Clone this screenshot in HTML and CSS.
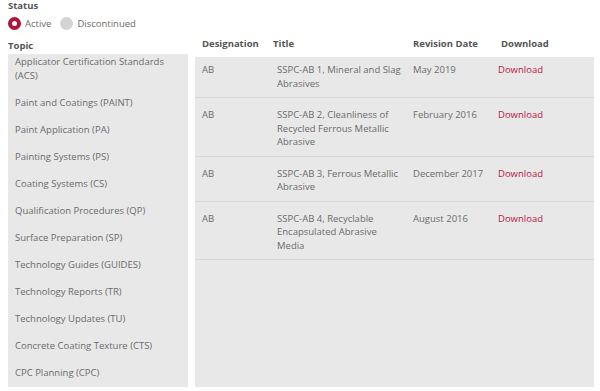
FILE: index.html
```html
<!DOCTYPE html>
<html lang="en">
<head>
  <meta charset="UTF-8" />
  <title>Standards</title>
  <link rel="stylesheet" href="styles.css">
</head>
<body>

<!-- Filtre statut -->
<div class="status">
  <div class="label">Status</div>
  <div class="radios">
    <label class="radio"><span class="dot on"></span>Active</label>
    <label class="radio"><span class="dot"></span>Discontinued</label>
  </div>
</div>

<div class="layout">
  <aside class="topics">
    <div class="label">Topic</div>
    <div class="topic-panel">
      <ul>
        <li>Applicator Certification Standards (ACS)</li>
        <li>Paint and Coatings (PAINT)</li>
        <li>Paint Application (PA)</li>
        <li>Painting Systems (PS)</li>
        <li>Coating Systems (CS)</li>
        <li>Qualification Procedures (QP)</li>
        <li>Surface Preparation (SP)</li>
        <li>Technology Guides (GUIDES)</li>
        <li>Technology Reports (TR)</li>
        <li>Technology Updates (TU)</li>
        <li>Concrete Coating Texture (CTS)</li>
        <li>CPC Planning (CPC)</li>
      </ul>
    </div>
  </aside>

  <section class="docs">
    <div class="row head">
      <div>Designation</div>
      <div class="h-title">Title</div>
      <div>Revision Date</div>
      <div class="h-dl">Download</div>
    </div>
    <div class="doc-body">
      <div class="row">
        <div>AB</div>
        <div>SSPC-AB 1, Mineral and Slag Abrasives</div>
        <div>May 2019</div>
        <div><a href="#">Download</a></div>
      </div>
      <div class="row">
        <div>AB</div>
        <div>SSPC-AB 2, Cleanliness of Recycled Ferrous Metallic Abrasive</div>
        <div>February 2016</div>
        <div><a href="#">Download</a></div>
      </div>
      <div class="row">
        <div>AB</div>
        <div>SSPC-AB 3, Ferrous Metallic Abrasive</div>
        <div>December 2017</div>
        <div><a href="#">Download</a></div>
      </div>
      <div class="row">
        <div>AB</div>
        <div>SSPC-AB 4, Recyclable Encapsulated Abrasive Media</div>
        <div>August 2016</div>
        <div><a href="#">Download</a></div>
      </div>
    </div>
  </section>
</div>

</body>
</html>
```

FILE: styles.css
```css
html, body {
  margin: 0;
  padding: 0;
  height: 100%;
  overflow: hidden;
  background: white;
}

body {
  padding: 0 6px 0 8px;
  font-family: 'Open Sans', 'Liberation Sans', sans-serif;
  font-size: 9.5px;
  color: #6b6b6b;
}

.label {
  font-weight: 700;
  font-size: 9.5px;
  line-height: 12px;
  color: #555;
}

.status {
  margin-bottom: 8px;
}

.radios {
  display: flex;
  gap: 9px;
  margin-top: 4px;
  height: 14px;
  align-items: center;
}

.radio {
  display: flex;
  align-items: center;
  gap: 4px;
  font-size: 9.5px;
}

.dot {
  width: 13px;
  height: 13px;
  border-radius: 50%;
  background: #d4d4d4;
  box-sizing: border-box;
}

.dot.on {
  background: white;
  border: 4px solid #ad1539;
}

.layout {
  display: grid;
  grid-template-columns: 180px 1fr;
  gap: 7px;
  height: 347px;
}

.topics {
  display: flex;
  flex-direction: column;
}

.topics .label {
  margin-top: 2px;
  margin-bottom: 2px;
}

.topic-panel {
  flex: 1;
  background: #e8e8e8;
  overflow: hidden;
}

.topic-panel ul {
  list-style: none;
  margin: -5px 0 0 0;
  padding: 0;
}

.topic-panel li {
  padding: 6px 7px 7px;
  line-height: 14px;
}

.docs {
  display: flex;
  flex-direction: column;
}

.row {
  display: grid;
  grid-template-columns: 75px 136px 85px 1fr;
  padding: 10px 7px 7px;
  line-height: 13.5px;
  border-bottom: 1px solid #d6d6d6;
}

.row > div {
  padding-right: 10px;
}

.row.head {
  padding: 0 7px 7px;
  border-bottom: none;
  line-height: 12px;
  font-weight: 700;
  color: #555;
}

.h-title {
  margin-left: -4px;
}

.h-dl {
  margin-left: 3px;
}

.doc-body {
  flex: 1;
  background: #e8e8e8;
}

.doc-body .row:first-child {
  padding-top: 6px;
}

a {
  color: #b9163f;
  text-decoration: none;
}
```
